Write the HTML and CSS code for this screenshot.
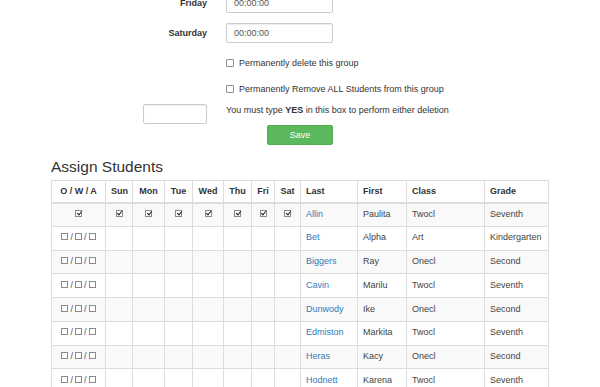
FILE: index.html
```html
<!DOCTYPE html>
<html>
<head>
<meta charset="utf-8">
<link rel="stylesheet" href="styles.css">
</head>
<body>
<div class="page">
  <form class="form">
    <div class="row">
      <label class="lbl">Friday</label>
      <div class="field"><div class="input">00:00:00</div></div>
    </div>
    <div class="row">
      <label class="lbl">Saturday</label>
      <div class="field"><div class="input">00:00:00</div></div>
    </div>
    <div class="row check-row">
      <div class="lbl"></div>
      <div class="field"><span class="box"></span><span>Permanently delete this group</span></div>
    </div>
    <div class="row check-row">
      <div class="lbl"></div>
      <div class="field"><span class="box"></span><span>Permanently Remove ALL Students from this group</span></div>
    </div>
    <div class="row yes-row">
      <div class="lbl"><div class="input small"></div></div>
      <div class="field yes-text"><span>You must type <b>YES</b> in this box to perform either deletion</span></div>
    </div>
    <div class="row btn-row">
      <div class="lbl"></div>
      <div class="field"><button type="button" class="save">Save</button></div>
    </div>
  </form>

  <h3 class="title">Assign Students</h3>

  <table class="tbl">
    <colgroup>
      <col style="width:54px"><col style="width:27px"><col style="width:32px"><col style="width:28px">
      <col style="width:31px"><col style="width:28px"><col style="width:23px"><col style="width:26px">
      <col style="width:57px"><col style="width:49px"><col style="width:78px"><col style="width:64px">
    </colgroup>
    <thead>
      <tr>
        <th class="c">O / W / A</th><th class="c">Sun</th><th class="c">Mon</th><th class="c">Tue</th>
        <th class="c">Wed</th><th class="c">Thu</th><th class="c">Fri</th><th class="c">Sat</th>
        <th>Last</th><th>First</th><th>Class</th><th>Grade</th>
      </tr>
    </thead>
    <tbody>
      <tr>
        <td class="c"><span class="cb on"></span></td>
        <td class="c"><span class="cb on"></span></td><td class="c"><span class="cb on"></span></td>
        <td class="c"><span class="cb on"></span></td><td class="c"><span class="cb on"></span></td>
        <td class="c"><span class="cb on"></span></td><td class="c"><span class="cb on"></span></td>
        <td class="c"><span class="cb on"></span></td>
        <td><a href="#">Allin</a></td><td>Paulita</td><td>Twocl</td><td>Seventh</td>
      </tr>
      <tr>
        <td class="c"><span class="cb"></span><span class="sl">/</span><span class="cb"></span><span class="sl">/</span><span class="cb"></span></td>
        <td></td><td></td><td></td><td></td><td></td><td></td><td></td>
        <td><a href="#">Bet</a></td><td>Alpha</td><td>Art</td><td>Kindergarten</td>
      </tr>
      <tr>
        <td class="c"><span class="cb"></span><span class="sl">/</span><span class="cb"></span><span class="sl">/</span><span class="cb"></span></td>
        <td></td><td></td><td></td><td></td><td></td><td></td><td></td>
        <td><a href="#">Biggers</a></td><td>Ray</td><td>Onecl</td><td>Second</td>
      </tr>
      <tr>
        <td class="c"><span class="cb"></span><span class="sl">/</span><span class="cb"></span><span class="sl">/</span><span class="cb"></span></td>
        <td></td><td></td><td></td><td></td><td></td><td></td><td></td>
        <td><a href="#">Cavin</a></td><td>Marilu</td><td>Twocl</td><td>Seventh</td>
      </tr>
      <tr>
        <td class="c"><span class="cb"></span><span class="sl">/</span><span class="cb"></span><span class="sl">/</span><span class="cb"></span></td>
        <td></td><td></td><td></td><td></td><td></td><td></td><td></td>
        <td><a href="#">Dunwody</a></td><td>Ike</td><td>Onecl</td><td>Second</td>
      </tr>
      <tr>
        <td class="c"><span class="cb"></span><span class="sl">/</span><span class="cb"></span><span class="sl">/</span><span class="cb"></span></td>
        <td></td><td></td><td></td><td></td><td></td><td></td><td></td>
        <td><a href="#">Edmiston</a></td><td>Markita</td><td>Twocl</td><td>Seventh</td>
      </tr>
      <tr>
        <td class="c"><span class="cb"></span><span class="sl">/</span><span class="cb"></span><span class="sl">/</span><span class="cb"></span></td>
        <td></td><td></td><td></td><td></td><td></td><td></td><td></td>
        <td><a href="#">Heras</a></td><td>Kacy</td><td>Onecl</td><td>Second</td>
      </tr>
      <tr>
        <td class="c"><span class="cb"></span><span class="sl">/</span><span class="cb"></span><span class="sl">/</span><span class="cb"></span></td>
        <td></td><td></td><td></td><td></td><td></td><td></td><td></td>
        <td><a href="#">Hodnett</a></td><td>Karena</td><td>Twocl</td><td>Seventh</td>
      </tr>
    </tbody>
  </table>
</div>
</body>
</html>
```
FILE: styles.css
```css
* { box-sizing: border-box; }
html, body { margin: 0; padding: 0; background: #fff; }
body {
  font-family: "Liberation Sans", Arial, sans-serif;
  font-size: 9px;
  color: #333;
  overflow: hidden;
}
.page { padding-left: 51px; }

.form { margin: -7px 0 0 -51px; }
.row { display: flex; align-items: center; }
.lbl {
  width: 207px;
  text-align: right;
  font-weight: bold;
  flex: none;
  display: flex;
  justify-content: flex-end;
}
.field { margin-left: 19px; display: flex; align-items: center; }
.row + .row { margin-top: 10px; }
.input {
  width: 107px;
  height: 20px;
  border: 1px solid #ccc;
  border-radius: 2px;
  box-shadow: inset 0 1px 1px rgba(0,0,0,.075);
  padding-left: 7px;
  line-height: 18px;
  color: #555;
  background: #fff;
}
.input.small { width: 64px; }
.check-row { height: 10px; }
.row.check-row:nth-child(3) { margin-top: 15px; }
.row.check-row:nth-child(4) { margin-top: 16px; }
.box {
  display: inline-block;
  width: 8px;
  height: 8px;
  border: 1px solid #8f8f8f;
  border-radius: 1px;
  margin-right: 5px;
  background: #fff;
}
.row.yes-row { margin-top: 10px; align-items: flex-start; }
.yes-text { padding-top: 1px; line-height: 10px; }
.yes-text b { font-weight: bold; }
.row.btn-row { margin-top: 1px; }
.save {
  margin-left: 41px;
  width: 66px;
  height: 20px;
  background: #5cb85c;
  border: 1px solid #4cae4c;
  border-radius: 2px;
  color: #fff;
  font-family: "Liberation Sans", Arial, sans-serif;
  font-size: 9px;
  padding: 0;
}

.title {
  margin: 12px 0 0 0;
  font-size: 15.5px;
  font-weight: normal;
  line-height: 20px;
  color: #333;
  height: 23px;
}

.tbl {
  border-collapse: collapse;
  table-layout: fixed;
  width: 497px;
  border: 1px solid #ddd;
}
.tbl th, .tbl td {
  border: 1px solid #ddd;
  padding: 0 5px;
  text-align: left;
  white-space: nowrap;
  overflow: hidden;
}
.tbl th {
  font-weight: bold;
  line-height: 20px;
  height: 22px;
  border-bottom: 2px solid #ddd;
}
.tbl td {
  line-height: 21.75px;
  height: 23.75px;
  color: #444;
}
.tbl .c { text-align: center; }
.tbl tbody tr:nth-child(odd) td { background: #f9f9f9; }
.tbl a { color: #337ab7; text-decoration: none; }

.cb {
  display: inline-block;
  width: 7px;
  height: 7px;
  border: 1px solid #8a8a8a;
  background: #fff;
  vertical-align: middle;
  position: relative;
  top: -1px;
}
.cb.on::after {
  content: "";
  position: absolute;
  left: 1.5px;
  top: -0.5px;
  width: 2px;
  height: 4px;
  border-right: 1.5px solid #222;
  border-bottom: 1.5px solid #222;
  transform: rotate(40deg);
}
.sl { margin: 0 2px; color: #555; }
```
